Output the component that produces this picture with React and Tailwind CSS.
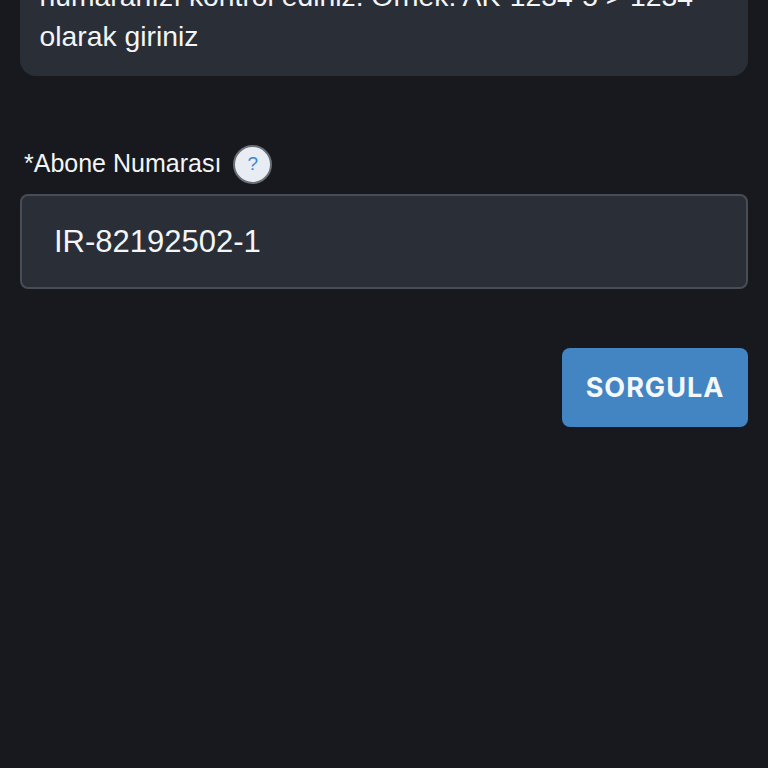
import React from "react";

const App = () => {
  return (
    <div
      className="h-screen w-full overflow-hidden bg-[#17191e] px-5 text-white"
      style={{ fontFamily: '"Liberation Sans", Arial, sans-serif' }}
    >
      {/* info box, scrolled past the top */}
      <div className="-mt-[24px] rounded-b-[16px] bg-[#2a2e36] pl-[19.5px] pr-5 pb-[20px] text-[28.3px] leading-[40px] text-[#f4f5f6]">
        <p className="whitespace-nowrap">
          numaranızı kontrol ediniz. Örnek: AK-1234-5 &gt; 1234
        </p>
        <p>olarak giriniz</p>
      </div>

      {/* label */}
      <div className="mt-[69px] flex items-center pl-1">
        <label className="-mt-[4px] text-[25px] leading-[40px] text-[#f4f5f6]">
          *Abone Numarası
        </label>
        <span className="ml-3 flex size-[39px] items-center justify-center rounded-full border-2 border-[#6b6e75] bg-[#e8edf4] text-[19px] font-medium text-[#3f86d0]">
          ?
        </span>
      </div>

      {/* input */}
      <div className="mt-[10px] flex h-[95px] items-center rounded-[8px] border-2 border-[#484c57] bg-[#2a2e36] pl-[32px] pt-[2px] text-[31px] text-[#f4f5f6]">
        IR-82192502-1
      </div>

      {/* button */}
      <div className="mt-[59px] flex justify-end">
        <button
          className="flex h-[79px] w-[186px] items-center justify-center rounded-[8px] bg-[#4384c3] pt-[1px] text-[27px] font-bold tracking-[1px] text-[#f4f8fb]"
          style={{ fontFamily: "Inter, sans-serif" }}
        >
          SORGULA
        </button>
      </div>
    </div>
  );
};

export default App;
